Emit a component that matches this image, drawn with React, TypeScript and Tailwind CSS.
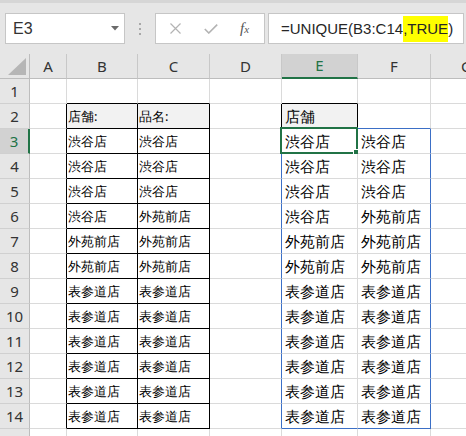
import React from 'react';

const GRAY = 'g';
const BLACK = 'k';
const BLUE = 'b';

const colW = ['w-[37px]', 'w-[71px]', 'w-[72px]', 'w-[72px]', 'w-[76px]', 'w-[73px]', 'w-[72px]'];
const letters = ['A', 'B', 'C', 'D', 'E', 'F', 'G'];

const rightCls: Record<string, string> = {
  g: 'border-r-[#dadada]',
  k: 'border-r-black',
  b: 'border-r-[#3b6fc6]',
};
const bottomCls: Record<string, string> = {
  g: 'border-b-[#dadada]',
  k: 'border-b-black',
  b: 'border-b-[#3b6fc6]',
};

const data: Record<number, string[]> = {
  2: ['', '店舗:', '品名:', '', '店舗', '', ''],
  3: ['', '渋谷店', '渋谷店', '', '渋谷店', '渋谷店', ''],
  4: ['', '渋谷店', '渋谷店', '', '渋谷店', '渋谷店', ''],
  5: ['', '渋谷店', '渋谷店', '', '渋谷店', '渋谷店', ''],
  6: ['', '渋谷店', '外苑前店', '', '渋谷店', '外苑前店', ''],
  7: ['', '外苑前店', '外苑前店', '', '外苑前店', '外苑前店', ''],
  8: ['', '外苑前店', '外苑前店', '', '外苑前店', '外苑前店', ''],
  9: ['', '表参道店', '表参道店', '', '表参道店', '表参道店', ''],
  10: ['', '表参道店', '表参道店', '', '表参道店', '表参道店', ''],
  11: ['', '表参道店', '表参道店', '', '表参道店', '表参道店', ''],
  12: ['', '表参道店', '表参道店', '', '表参道店', '表参道店', ''],
  13: ['', '表参道店', '表参道店', '', '表参道店', '表参道店', ''],
  14: ['', '表参道店', '表参道店', '', '表参道店', '表参道店', ''],
};

// c: 0=A ... 6=G
function rightColor(r: number, c: number) {
  if (r >= 2 && r <= 14 && c <= 2) return BLACK;
  if (r === 2 && (c === 3 || c === 4)) return BLACK;
  if (r >= 3 && r <= 14 && (c === 3 || c === 5)) return BLUE;
  return GRAY;
}

function bottomColor(r: number, c: number) {
  if (r >= 1 && r <= 14 && (c === 1 || c === 2)) return BLACK;
  if ((r === 1 || r === 2) && c === 4) return BLACK;
  if (r === 2 && c === 5) return BLUE;
  if (r === 14 && (c === 4 || c === 5)) return BLUE;
  return GRAY;
}

function Toolbar() {
  return (
    <div className="h-[54px] bg-[#e6e6e6] shrink-0">
      <div className="h-[3px] bg-[#d6d6d6]" />
      <div className="flex items-start pt-[10px]">
        <div className="ml-[5px] w-[120px] h-[31px] bg-white border border-[#c6c6c6] flex items-center justify-between pl-[7px] pr-[5px]">
          <span className="text-[16px] text-[#333] font-['Liberation_Sans',sans-serif]">E3</span>
          <svg width="8" height="5" viewBox="0 0 8 5">
            <path d="M0 0 L8 0 L4 4.5 Z" fill="#6b6b6b" />
          </svg>
        </div>
        <div className="w-[30px] h-[31px] flex flex-col items-center justify-center gap-[3px]">
          <div className="w-[2px] h-[2px] bg-[#a8a8a8]" />
          <div className="w-[2px] h-[2px] bg-[#a8a8a8]" />
          <div className="w-[2px] h-[2px] bg-[#a8a8a8]" />
        </div>
        <div className="w-[110px] h-[31px] bg-white border border-[#c6c6c6] flex items-center">
          <svg width="11" height="11" viewBox="0 0 11 11" className="ml-[14px]">
            <path d="M0.5 0.5 L10.5 10.5 M10.5 0.5 L0.5 10.5" stroke="#b3b3b3" strokeWidth="1.2" />
          </svg>
          <svg width="14" height="10" viewBox="0 0 14 10" className="ml-[23px]">
            <path d="M0.8 5 L4.8 9 L13.2 0.6" stroke="#b3b3b3" strokeWidth="1.6" fill="none" />
          </svg>
          <span className="ml-[22px] italic text-[15px] text-[#555] font-['Liberation_Serif',serif] leading-none">
            f<span className="text-[11px]">x</span>
          </span>
        </div>
        <div className="ml-[3px] w-[196px] h-[31px] bg-white border border-[#c6c6c6] flex items-center pl-[12px] overflow-hidden whitespace-nowrap">
          <span className="text-[15px] text-[#262626] font-['Liberation_Sans',sans-serif] leading-[26px]">
            =UNIQUE(B3:C14<span className="bg-[#ffff00] inline-block h-[26px]">,TRUE</span>)
          </span>
        </div>
      </div>
    </div>
  );
}

function HeaderRow() {
  return (
    <div className="flex h-[25px] shrink-0">
      <div className="w-[30px] shrink-0 h-[25px] bg-[#e6e6e6] border-r border-b border-r-[#bdbdbd] border-b-[#bdbdbd] relative">
        <svg width="18" height="17" viewBox="0 0 18 17" className="absolute right-[3px] bottom-[3px]">
          <path d="M18 0 L18 17 L0 17 Z" fill="#b6b6b6" />
        </svg>
      </div>
      {letters.map((l, i) => (
        <div
          key={l}
          className={
            colW[i] +
            ' shrink-0 h-[25px] border-r border-r-[#c8c8c8] flex items-center justify-center text-[15px] font-[\'Noto_Sans_CJK_JP\',sans-serif] ' +
            (l === 'E'
              ? 'bg-[#d2d2d2] border-b-2 border-b-[#217346] text-[#217346]'
              : 'bg-[#e6e6e6] border-b border-b-[#bdbdbd] text-[#333]')
          }
        >
          {l}
        </div>
      ))}
    </div>
  );
}

function Row({ r }: { r: number }) {
  const vals = data[r] ?? ['', '', '', '', '', '', ''];
  const active = r === 3;
  return (
    <div className="flex h-[25px] shrink-0">
      <div
        className={
          'w-[30px] shrink-0 h-[25px] border-b border-b-[#d0d0d0] flex items-center justify-center text-[15px] font-[\'Noto_Sans_CJK_JP\',sans-serif] ' +
          (active
            ? 'bg-[#d2d2d2] border-r-2 border-r-[#217346] text-[#217346]'
            : 'bg-[#e6e6e6] border-r border-r-[#bdbdbd] text-[#333]')
        }
      >
        {r}
      </div>
      {vals.map((v, c) => {
        const big = c === 4 || c === 5;
        const head = r === 2 && (c === 1 || c === 2 || c === 4);
        return (
          <div
            key={c}
            className={
              colW[c] +
              ' shrink-0 h-[25px] border-r border-b relative flex items-center overflow-visible whitespace-nowrap text-black font-[\'Noto_Sans_CJK_JP\',sans-serif] ' +
              rightCls[rightColor(r, c)] +
              ' ' +
              bottomCls[bottomColor(r, c)] +
              ' ' +
              (big ? 'text-[15px] pl-[3px] ' : 'text-[13px] pl-[1px] ') +
              (head ? 'bg-[#f2f2f2]' : 'bg-white')
            }
          >
            <span className="leading-none">{v}</span>
            {r === 3 && c === 4 && (
              <div className="absolute -left-[2px] -top-[2px] w-[78px] h-[27px] border-2 border-[#217346] pointer-events-none">
                <div className="absolute -right-[4px] -bottom-[4px] w-[7px] h-[7px] bg-[#217346] border border-white" />
              </div>
            )}
          </div>
        );
      })}
    </div>
  );
}

export default function App() {
  const rows = Array.from({ length: 15 }, (_, i) => i + 1);
  return (
    <div className="w-[466px] h-[436px] overflow-hidden bg-white flex flex-col">
      <Toolbar />
      <HeaderRow />
      {rows.map((r) => (
        <Row key={r} r={r} />
      ))}
    </div>
  );
}
